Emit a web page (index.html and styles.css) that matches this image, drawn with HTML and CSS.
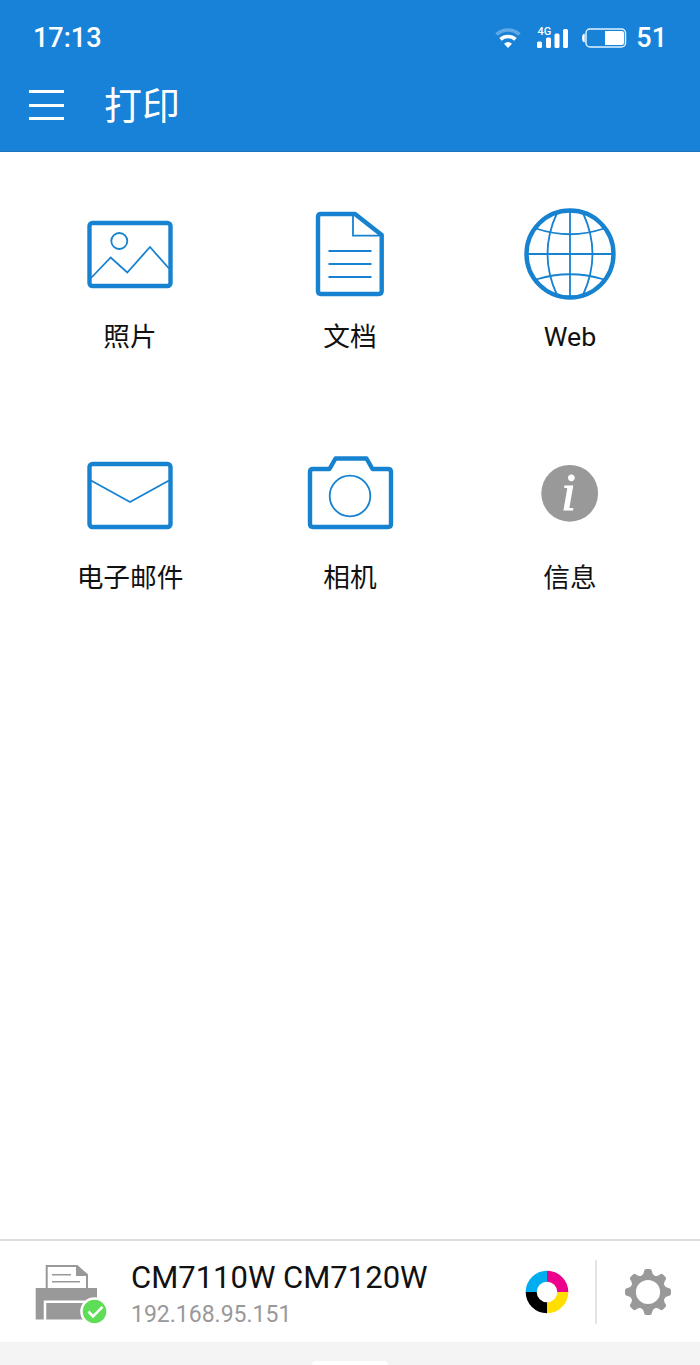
FILE: index.html
```html
<!DOCTYPE html>
<html lang="zh-CN">

<head>
  <meta charset="utf-8">
  <meta name="viewport" content="width=device-width, initial-scale=1">
  <title>打印</title>
  <link rel="stylesheet" href="styles.css">
</head>

<body>
  <header>
    <div class="status">
      <span class="clock">17:13</span>
      <div class="indicators">
        <svg class="wifi" width="26" height="22" viewBox="0 0 26 22">
          <path d="M1.5 7.5 A17 17 0 0 1 24.5 7.5" fill="none" stroke="#5fa9e6" stroke-width="3.6"/>
          <path d="M5.5 12.3 A11.5 11.5 0 0 1 20.5 12.3" fill="none" stroke="#fff" stroke-width="3.6"/>
          <path d="M9 16.8 Q13 13.2 17 16.8 L13 21 Z" fill="#fff"/>
        </svg>
        <svg class="signal" width="33" height="24" viewBox="0 0 33 24">
          <text x="0.5" y="9" class="net">4G</text>
          <rect x="0" y="15.5" width="5" height="6.5" rx="1.5"/>
          <rect x="9" y="11.5" width="5" height="10.5" rx="1.5"/>
          <rect x="17.5" y="7.5" width="5" height="14.5" rx="1.5"/>
          <rect x="26" y="3" width="5" height="19" rx="1.5"/>
        </svg>
        <svg class="battery" width="45" height="20" viewBox="0 0 45 20">
          <path d="M2.2 6 Q0.7 6 0.7 9 V11 Q0.7 14 2.2 14 Z" fill="#fff" stroke="#fff" stroke-width="1"/>
          <rect x="4" y="1" width="39.5" height="18" rx="4" fill="none" stroke="#e0f3ff" stroke-width="1.5"/>
          <path d="M23 3 H40 Q42 3 42 5 V15 Q42 17 40 17 H23 Z" fill="#fff"/>
        </svg>
        <span class="percent">51</span>
      </div>
    </div>
    <div class="titlebar">
      <div class="menu"><i></i><i></i><i></i></div>
      <h1>打印</h1>
    </div>
  </header>

  <main>
    <a class="item">
      <svg viewBox="0 0 96 96">
        <rect class="thick" x="7.5" y="17" width="81" height="63" rx="3"/>
        <circle cx="37.3" cy="35" r="8"/>
        <path d="M9 72 L28.7 51.5 L45.3 66.5 L68 41 L87 62.5"/>
      </svg>
      <span>照片</span>
    </a>
    <a class="item">
      <svg viewBox="0 0 96 96">
        <path class="thick" d="M19 8 H53 L79.7 29 V85 Q79.7 88 76.7 88 H19 Q16 88 16 85 V11 Q16 8 19 8 Z"/>
        <path d="M51 9 V29.7 H79"/>
        <path d="M26.5 45 H69.5 M26.5 58 H69.5 M26.5 71 H69.5"/>
      </svg>
      <span>文档</span>
    </a>
    <a class="item">
      <svg viewBox="0 0 96 96">
        <circle class="thick" cx="48" cy="48" r="43.5"/>
        <path d="M48 5 V91 M5 48 H91"/>
        <path d="M35 7 Q16 48 35 89 M61 7 Q80 48 61 89"/>
        <path d="M14 22.5 Q48 34 82 22.5 M14 73.5 Q48 63 82 73.5"/>
      </svg>
      <span>Web</span>
    </a>
    <a class="item">
      <svg viewBox="0 0 96 96">
        <rect class="thick" x="7.5" y="17" width="81" height="63" rx="3"/>
        <path d="M9 33.5 L48 55 L87 33.5"/>
      </svg>
      <span>电子邮件</span>
    </a>
    <a class="item">
      <svg viewBox="0 0 96 96">
        <path class="thick" d="M11 22 H27.5 L33.5 11.5 H64.5 L70.5 22 H86 Q89 22 89 25 V77 Q89 80 86 80 H11 Q8 80 8 77 V25 Q8 22 11 22 Z"/>
        <circle cx="48" cy="49" r="20.3"/>
      </svg>
      <span>相机</span>
    </a>
    <a class="item">
      <svg viewBox="0 0 96 96">
        <circle class="info" cx="47.7" cy="46.3" r="28.4"/>
        <text class="info-letter" x="46.5" y="63" text-anchor="middle">i</text>
      </svg>
      <span>信息</span>
    </a>
  </main>

  <footer>
    <svg class="printer" width="74" height="62" viewBox="0 0 74 62">
      <path d="M11.7 26 V4 H42 L52 13 V26" fill="#fff" stroke="#999" stroke-width="2"/>
      <path d="M41 3 L53 12.5 V14 H41 Z" fill="#999"/>
      <path d="M17 12.7 H36 M17 19.7 H45" stroke="#999" stroke-width="1.6"/>
      <path d="M.7 26 H62 V57.5 H.7 Z" fill="#999"/>
      <path d="M10 58 V39.8 H62" fill="none" stroke="#fff" stroke-width="2.5"/>
      <circle cx="59.5" cy="49.5" r="14.3" fill="#fff"/>
      <circle cx="59.5" cy="49.5" r="11.8" fill="#5fdd57"/>
      <path d="M53.5 49.5 L58 54.3 L67.5 44.8" fill="none" stroke="#fff" stroke-width="2.6"/>
    </svg>
    <div class="device">
      <div class="name">CM7110W CM7120W</div>
      <div class="ip">192.168.95.151</div>
    </div>
    <svg class="toner" width="44" height="44" viewBox="-22 -22 44 44">
      <path d="M-15.8 0 A15.8 15.8 0 0 1 0 -15.8" stroke="#00aeef"/>
      <path d="M0 -15.8 A15.8 15.8 0 0 1 15.8 0" stroke="#ec008c"/>
      <path d="M15.8 0 A15.8 15.8 0 0 1 0 15.8" stroke="#ffde00"/>
      <path d="M0 15.8 A15.8 15.8 0 0 1 -15.8 0" stroke="#000"/>
    </svg>
    <div class="divider"></div>
    <svg class="gear" width="48" height="48" viewBox="-24 -24 48 48">
      <defs>
        <path id="tooth" d="M-8 -15.5 Q-4.5 -17 -4 -20.5 Q-3.8 -23 -1.8 -23 H1.8 Q3.8 -23 4 -20.5 Q4.5 -17 8 -15.5 Z"/>
      </defs>
      <circle r="14.8" fill="none" stroke="#999" stroke-width="5.4"/>
      <g fill="#999">
        <use href="#tooth"/>
        <use href="#tooth" transform="rotate(45)"/>
        <use href="#tooth" transform="rotate(90)"/>
        <use href="#tooth" transform="rotate(135)"/>
        <use href="#tooth" transform="rotate(180)"/>
        <use href="#tooth" transform="rotate(225)"/>
        <use href="#tooth" transform="rotate(270)"/>
        <use href="#tooth" transform="rotate(315)"/>
      </g>
    </svg>
  </footer>
  <div class="navbar"><div class="pill"></div></div>
</body>

</html>
```
FILE: styles.css
```css
* {
  box-sizing: border-box;
}

body {
  margin: 0;
  height: 1365px;
  display: flex;
  flex-direction: column;
  overflow: hidden;
  background-color: #fff;
  font-family: Roboto, "Noto Sans CJK SC", sans-serif;
  color: #111;
}

header {
  height: 152px;
  background-color: #1782d7;
  border-bottom: 1px solid #1c75bd;
  color: #fff;
}

.status {
  display: flex;
  justify-content: space-between;
  align-items: center;
  height: 75px;
  padding: 0 33px;
  font-size: 27px;
  font-weight: 500;
}

.indicators {
  display: flex;
  align-items: center;
}

.wifi {
  margin-right: 16px;
}

.signal {
  margin-right: 12px;
  fill: #fff;
}

.net {
  font-size: 11px;
  font-weight: 500;
}

.battery {
  margin-right: 9px;
}

.titlebar {
  display: flex;
  align-items: center;
  height: 60px;
  padding-left: 29px;
}

.menu {
  display: flex;
  flex-direction: column;
  gap: 10.5px;
  width: 35px;
  margin-right: 40px;
}

.menu i {
  height: 3px;
  background-color: #fff;
}

h1 {
  margin: 2px 0 0;
  font-size: 38px;
  line-height: 58px;
  font-weight: 400;
}

main {
  flex: 1;
  display: grid;
  grid-template-columns: repeat(3, 220px);
  grid-auto-rows: 241px;
  justify-content: center;
  padding-top: 54px;
}

.item {
  display: flex;
  flex-direction: column;
  align-items: center;
}

.item svg {
  width: 96px;
  height: 96px;
  fill: none;
  stroke: #1782d0;
  stroke-width: 1.8;
}

.item .thick {
  stroke-width: 4.4;
  stroke-linejoin: round;
}

.item .info {
  fill: #999;
  stroke: none;
}

.item .info-letter {
  font: italic 52px "Liberation Serif", serif;
  fill: #fff;
  stroke: #fff;
  stroke-width: 1.2;
}

.item span {
  margin-top: 15px;
  font-size: 26.7px;
  line-height: 40px;
}

footer {
  display: flex;
  align-items: center;
  height: 103px;
  padding: 0 28px 0 35px;
  border-top: 2px solid #dedede;
}

.printer {
  margin: 3px 22px 0 0;
}

.device {
  flex: 1;
  padding-top: 8px;
}

.name {
  font-size: 31px;
  line-height: 38px;
}

.ip {
  font-size: 23px;
  line-height: 36px;
  color: #999;
}

.toner {
  fill: none;
  stroke-width: 11;
}

.divider {
  width: 2px;
  height: 64px;
  margin: 0 27px 0 26px;
  background-color: #e4e4e4;
}

.navbar {
  height: 23px;
  padding-top: 19px;
  background-color: #f4f4f4;
}

.pill {
  width: 76px;
  height: 4px;
  margin: 0 auto;
  border-radius: 4px 4px 0 0;
  background-color: #fff;
}
```
